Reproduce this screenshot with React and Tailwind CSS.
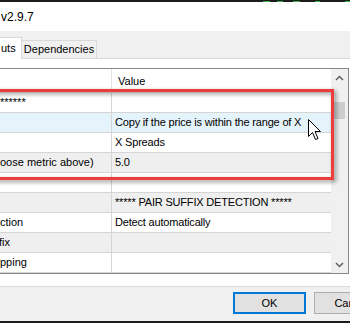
import React from 'react';

const rows = [
  { left: '******', right: '', bg: 'bg-white' },
  { left: '', right: 'Copy if the price is within the range of X', bg: 'bg-[#e5f3fb]' },
  { left: '', right: 'X Spreads', bg: 'bg-white' },
  { left: 'oose metric above)', right: '5.0', bg: 'bg-[#efefef]' },
  { left: '', right: '', bg: 'bg-white' },
  { left: '', right: '***** PAIR SUFFIX DETECTION *****', bg: 'bg-[#efefef]' },
  { left: 'ction', right: 'Detect automatically', bg: 'bg-white' },
  { left: 'fix', right: '', bg: 'bg-[#efefef]' },
  { left: 'pping', right: '', bg: 'bg-white' },
];

const Chevron = ({ down }) => (
  <svg width="9" height="6" viewBox="0 0 9 6">
    <polyline
      points={down ? '1,1 4.5,4.5 8,1' : '1,5 4.5,1.5 8,5'}
      fill="none"
      stroke="#606060"
      strokeWidth="1.5"
    />
  </svg>
);

export default function App() {
  return (
    <div className="relative w-[350px] h-[323px] overflow-hidden bg-[#f0f0f0] font-['Liberation_Sans',Arial,sans-serif] text-[11px] text-black leading-none">
      {/* top strip */}
      <div className="h-[2px] bg-[#1c1c1c] flex items-end">
        <div className="ml-[263px] w-[7px] h-px bg-[#3cb043]" />
        <div className="ml-[7px] w-[6px] h-px bg-[#3cb043]" />
        <div className="ml-[10px] w-[7px] h-px bg-[#3cb043]" />
        <div className="ml-[15px] w-[5px] h-px bg-[#3cb043]" />
        <div className="ml-[25px] w-[5px] h-px bg-[#3cb043]" />
      </div>

      {/* title */}
      <div className="h-[29px] bg-white flex items-center pl-px text-[12px]">v2.9.7</div>

      {/* tabs */}
      <div className="h-[27px] flex items-end">
        <div className="relative z-10 -mb-px h-[22px] w-[22px] bg-white border-t border-r border-[#d9d9d9] flex items-center pl-px">
          uts
        </div>
        <div className="h-[18px] w-[75px] border-t border-r border-[#d9d9d9] flex items-center justify-center">
          Dependencies
        </div>
      </div>

      {/* tab page */}
      <div className="bg-white border-t border-b border-[#d9d9d9] pt-[9px] pb-[12px]">
        <div className="flex border-t border-r border-b border-[#828790] mr-px">
          <div className="w-[331px]">
            <div className="h-[24px] flex border-b border-[#e5e5e5]">
              <div className="w-[112px] border-r border-[#e5e5e5]" />
              <div className="flex-1 flex items-center pl-[6px] pt-[2px]">Value</div>
            </div>
            {rows.map((r, i) => (
              <div key={i} className={`h-[20px] flex border-b border-[#d5d5d5] ${r.bg}`}>
                <div className="w-[112px] border-r border-[#d5d5d5] flex items-center overflow-hidden whitespace-nowrap">
                  <span className={r.left === 'fix' ? '-ml-px' : ''}>{r.left}</span>
                </div>
                <div className="flex-1 flex items-center pl-[3px] whitespace-nowrap overflow-hidden tracking-[-0.18px]">
                  {r.right}
                </div>
              </div>
            ))}
          </div>
          <div className="w-[17px] bg-[#f0f0f0] flex flex-col items-center">
            <div className="h-[17px] flex items-center justify-center">
              <Chevron />
            </div>
            <div className="mt-[16px] w-[11px] h-[17px] bg-[#cdcdcd]" />
            <div className="flex-1" />
            <div className="h-[17px] flex items-center justify-center">
              <Chevron down />
            </div>
          </div>
        </div>
      </div>

      {/* buttons */}
      <div className="h-[34px] flex items-start pt-[5px] pl-[233px]">
        <div className="shrink-0 w-[73px] h-[22px] border-2 border-[#0078d7] bg-[#e1e1e1] flex items-center justify-center">
          OK
        </div>
        <div className="shrink-0 ml-[8px] w-[75px] h-[22px] border border-[#adadad] bg-[#e1e1e1] flex items-center justify-center">
          Cancel
        </div>
      </div>
      <div className="h-[2px] bg-[#1c1c1c]" />

      {/* red highlight overlay */}
      <div className="absolute left-[-10px] top-[89px] w-[344px] h-[91px] border-[3px] border-[#ee3b3b] drop-shadow-[2px_2px_2px_rgba(0,0,0,0.45)]" />

      {/* mouse cursor */}
      <svg className="absolute left-[308px] top-[119px]" width="15" height="22" viewBox="0 0 15 22">
        <path
          d="M0.5 0.5 V17.5 L4.5 13.5 L7.5 20.5 L10 19.5 L7 12.5 H12.5 Z"
          fill="#fff"
          stroke="#000"
          strokeWidth="1"
          strokeLinejoin="miter"
        />
      </svg>
    </div>
  );
}
